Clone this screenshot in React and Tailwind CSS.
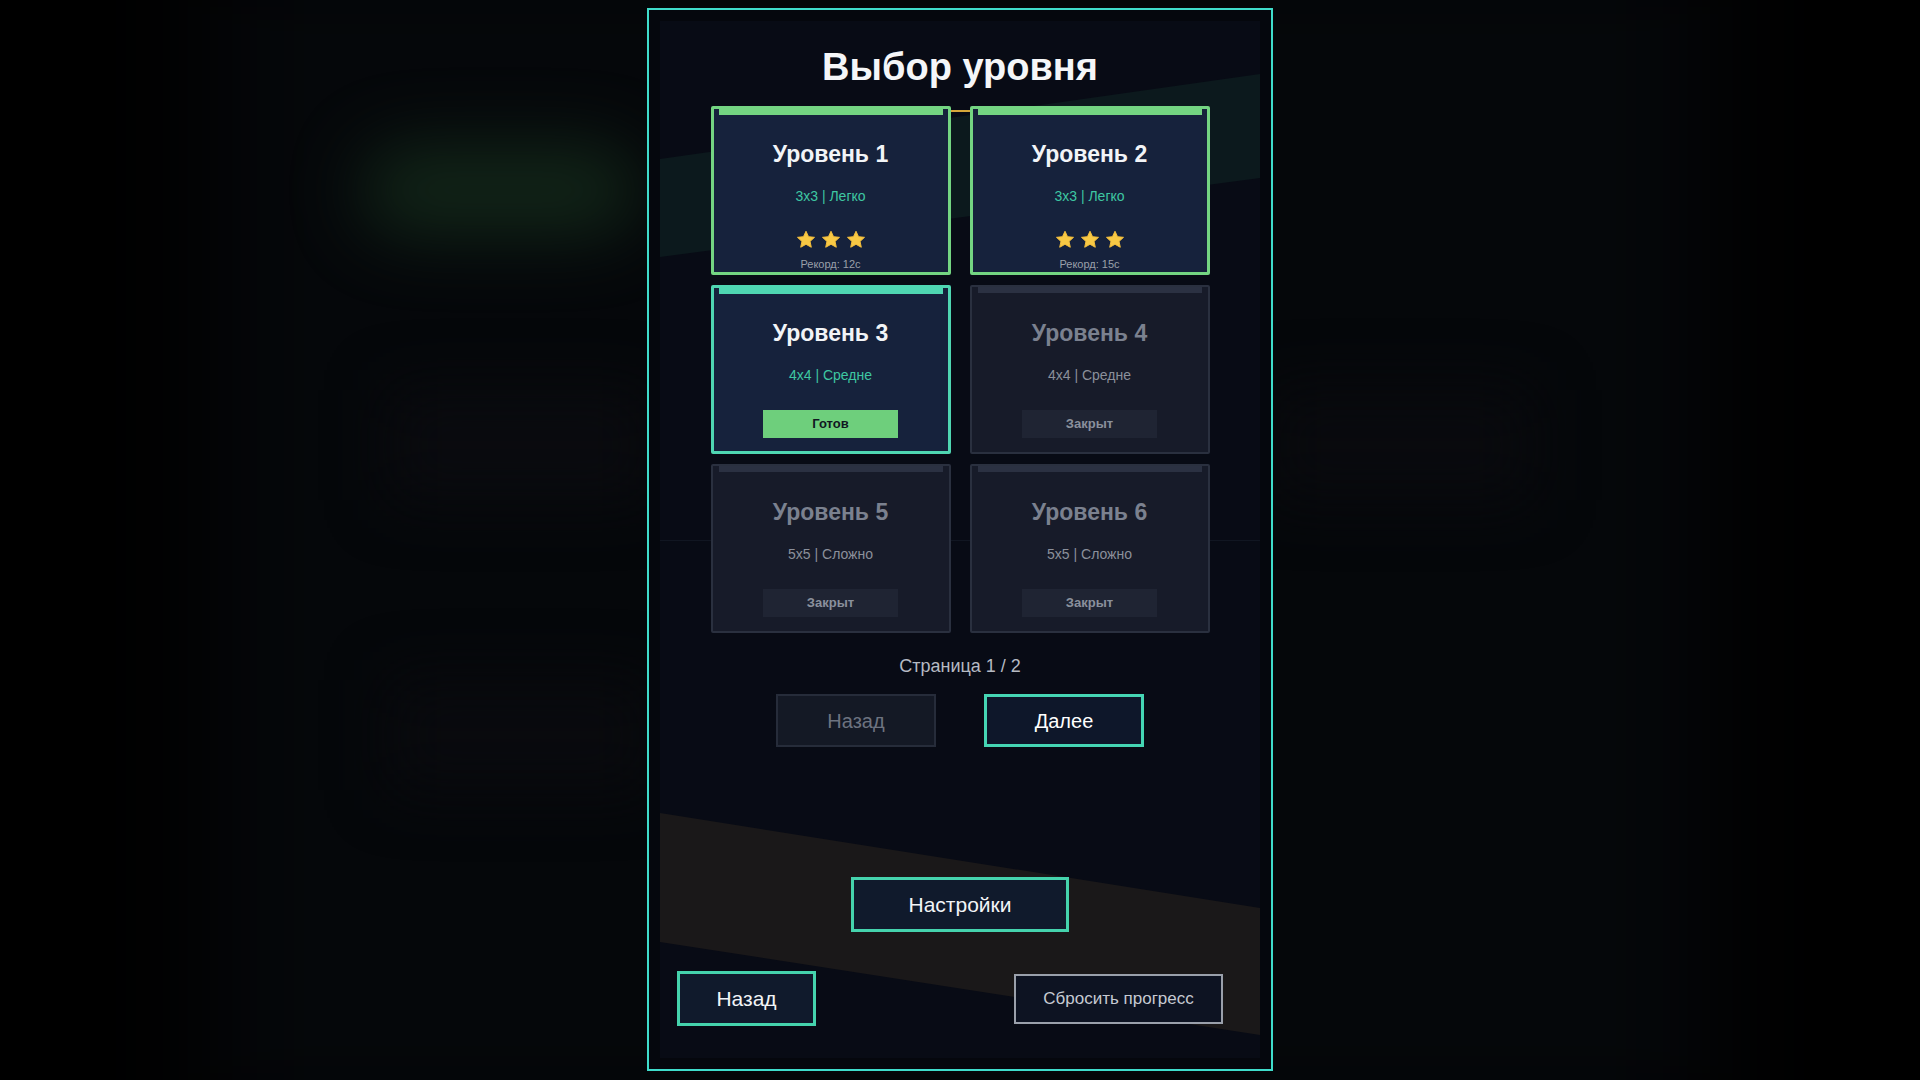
import React from 'react'

const LEVELS = [
  { n: 1, size: '3x3', diff: 'Легко', state: 'done', record: '12с' },
  { n: 2, size: '3x3', diff: 'Легко', state: 'done', record: '15с' },
  { n: 3, size: '4x4', diff: 'Средне', state: 'ready' },
  { n: 4, size: '4x4', diff: 'Средне', state: 'locked' },
  { n: 5, size: '5x5', diff: 'Сложно', state: 'locked' },
  { n: 6, size: '5x5', diff: 'Сложно', state: 'locked' },
]

const CARD_STYLES = {
  done: {
    card: 'border-[3px] pt-[31px] border-[#74d582] bg-[#16223c]',
    bar: 'bg-[#74d582] left-[5px] right-[5px]',
    title: 'text-[#f2f4f7]',
    sub: 'text-[#3ec7a2]',
  },
  ready: {
    card: 'border-[3px] pt-[31px] border-[#4fd6b2] bg-[#16223c]',
    bar: 'bg-[#4fd6b2] left-[5px] right-[5px]',
    title: 'text-[#f2f4f7]',
    sub: 'text-[#3ec7a2]',
  },
  locked: {
    card: 'border-2 pt-[32px] border-[#2a303f] bg-[#171b29]',
    bar: 'bg-[#2b3142] left-[6px] right-[6px]',
    title: 'text-[#7b818f]',
    sub: 'text-[#8b909b]',
  },
}

function Star() {
  return (
    <svg width="20" height="19" viewBox="0 0 24 23">
      <path
        d="M12 1.5l3.1 6.6 7.2.8-5.4 4.9 1.5 7.1L12 17.3l-6.4 3.6 1.5-7.1-5.4-4.9 7.2-.8z"
        fill="#f8c945"
        stroke="#f3bd3c"
        strokeWidth="1.2"
        strokeLinejoin="round"
      />
    </svg>
  )
}

function LevelCard({ level }) {
  const s = CARD_STYLES[level.state]
  return (
    <div className={`relative flex flex-col items-center rounded-[2px] ${s.card}`}>
      <div className={`absolute top-0 h-[6px] ${s.bar}`} />
      <div className={`text-[23px] leading-[28px] font-bold ${s.title}`}>Уровень {level.n}</div>
      <div className={`mt-[19px] text-[14px] leading-[18px] ${s.sub}`}>
        {level.size} | {level.diff}
      </div>
      {level.state === 'done' && (
        <>
          <div className="mt-[25px] flex gap-[5px]">
            <Star />
            <Star />
            <Star />
          </div>
          <div className="mt-[9px] text-[11px] leading-[13px] text-[#9aa0aa]">Рекорд: {level.record}</div>
        </>
      )}
      {level.state === 'ready' && (
        <div className="mt-[26px] w-[135px] h-[28px] flex items-center justify-center bg-[#6ecf7c] text-[13px] font-bold text-[#111822]">
          Готов
        </div>
      )}
      {level.state === 'locked' && (
        <div className="mt-[26px] w-[135px] h-[28px] flex items-center justify-center bg-[#1f2433] text-[13px] font-bold text-[#8a909c]">
          Закрыт
        </div>
      )}
    </div>
  )
}

export default function App() {
  return (
    <div className="relative w-full h-screen overflow-hidden bg-black font-['Liberation_Sans',Arial,sans-serif]">
      {/* blurred game backdrop */}
      <div className="absolute inset-0">
        <div className="absolute left-[210px] right-[210px] top-[-60px] bottom-[-60px] bg-[#05070a] blur-[60px]" />
        <div className="absolute left-[360px] top-[145px] w-[280px] h-[90px] rounded-full bg-[#1b3a22] opacity-60 blur-[35px]" />
        <div className="absolute left-[390px] top-[390px] w-[260px] h-[110px] bg-[#0a0b0f] blur-[30px]" />
        <div className="absolute left-[390px] top-[680px] w-[260px] h-[110px] bg-[#090a0e] blur-[30px]" />
        <div className="absolute right-[390px] top-[390px] w-[260px] h-[110px] bg-[#090a0e] blur-[30px]" />
      </div>

      <div className="relative flex justify-center pt-[8px]">
        <div className="w-[626px] h-[1063px] border-2 border-[#3fdccb] bg-[#05070d] px-[11px] py-[11px]">
          <div className="relative h-full overflow-hidden bg-[#080b15]">
            <svg className="absolute inset-0" width="600" height="1037" viewBox="0 0 600 1037">
              <polygon points="0,138 600,53 600,157 0,236" fill="#0c191d" />
              <polygon points="0,792 600,887 600,1014 0,921" fill="#1a1819" />
              <rect x="0" y="519" width="600" height="1" fill="#111622" />
            </svg>

            <div className="relative flex flex-col items-center">
              <h1 className="mt-[23px] text-[38px] leading-[46px] font-bold text-[#f5f6f8]">Выбор уровня</h1>

              <div className="relative mt-[16px] grid grid-cols-[240px_240px] auto-rows-[169px] gap-x-[19px] gap-y-[10px]">
                <div className="absolute left-[240px] top-[4px] w-[19px] h-[2px] bg-[#d6a63a]" />
                {LEVELS.map((lv) => (
                  <LevelCard key={lv.n} level={lv} />
                ))}
              </div>

              <div className="mt-[22px] text-[18px] leading-[22px] text-[#b6bac3]">Страница 1 / 2</div>

              <div className="mt-[17px] flex gap-[48px]">
                <button className="w-[160px] h-[53px] border-2 border-[#262c3a] bg-[#141925] text-[20px] text-[#6d7380]">
                  Назад
                </button>
                <button className="w-[160px] h-[53px] border-[3px] border-[#45d6b4] bg-[#0e172a] text-[20px] text-white">
                  Далее
                </button>
              </div>

              <button className="mt-[130px] w-[218px] h-[55px] border-[3px] border-[#45d3ad] bg-[#101a2c] text-[21px] text-[#f2f4f7]">
                Настройки
              </button>

              <div className="mt-[39px] w-full flex items-center justify-between pl-[17px] pr-[37px]">
                <button className="w-[139px] h-[55px] border-[3px] border-[#45d3ad] bg-[#101a2c] text-[21px] text-[#f2f4f7]">
                  Назад
                </button>
                <button className="w-[209px] h-[50px] border-2 border-[#9aa0ab] bg-[#0d1322] text-[17px] text-[#c6cad2]">
                  Сбросить прогресс
                </button>
              </div>
            </div>
          </div>
        </div>
      </div>
    </div>
  )
}
